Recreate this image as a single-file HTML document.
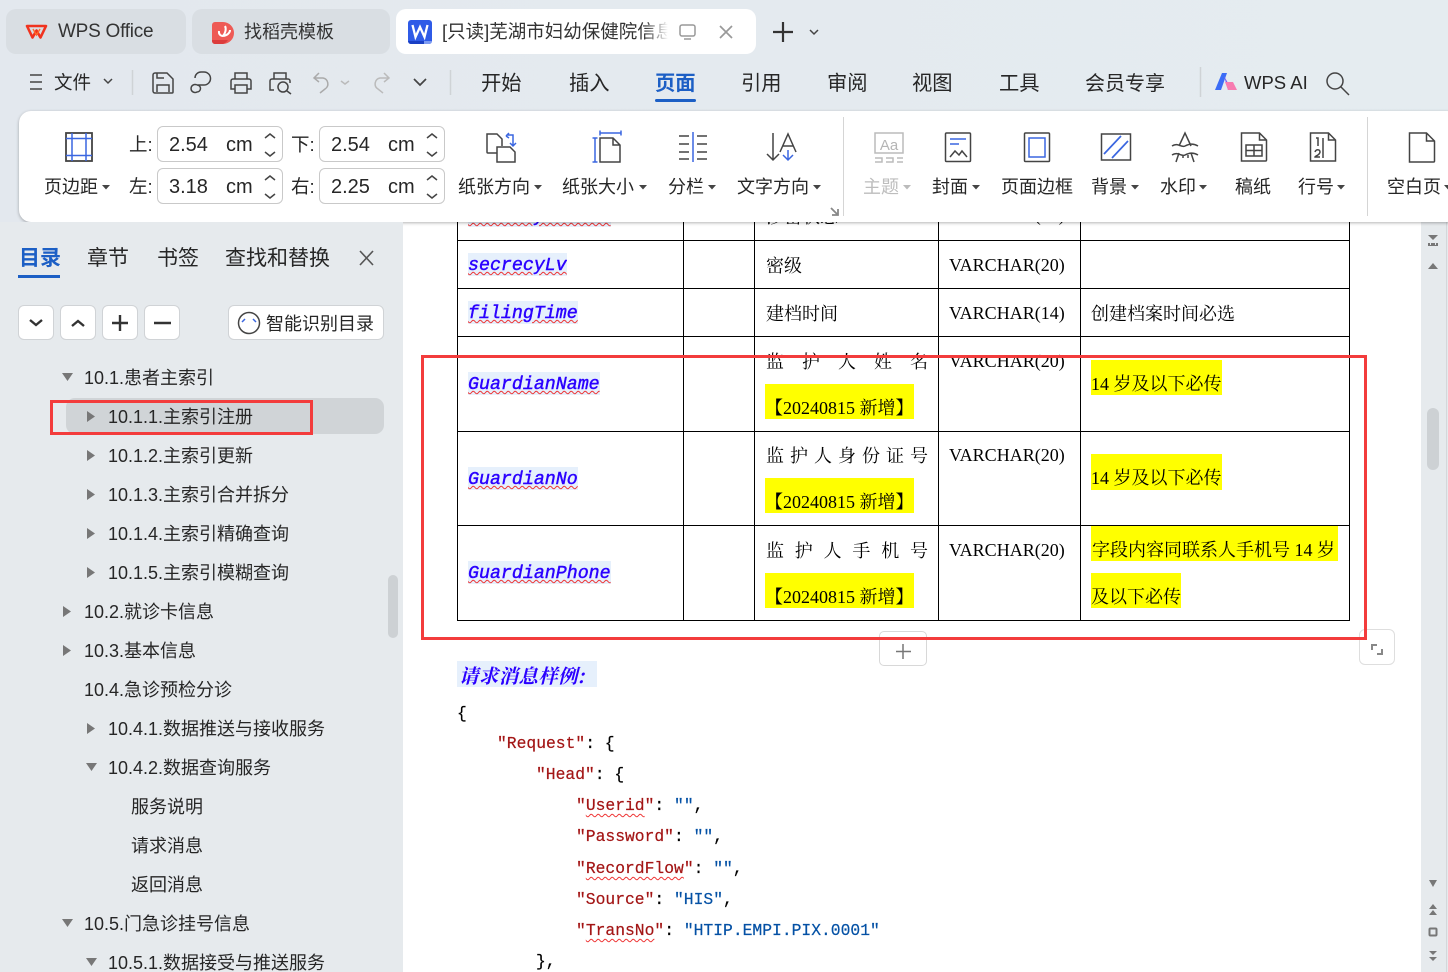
<!DOCTYPE html>
<html lang="zh-CN"><head><meta charset="utf-8"><title>WPS Office</title>
<style>
html,body{margin:0;padding:0;height:972px;overflow:hidden}
body{width:1448px;position:relative;background:linear-gradient(90deg,#e3e8ee,#e5ecf0);font-family:"Liberation Sans","Noto Sans CJK SC",sans-serif;color:#262626}
.a{position:absolute}
.t{position:absolute;white-space:nowrap;line-height:24px;height:24px;font-size:18px;margin-top:1px}
.n{margin-top:0}
.m{font-size:20.3px}
.s{font-family:"Liberation Serif","Noto Serif CJK SC",serif;color:#000;font-size:18px;margin-top:0}
.f{font-family:"Liberation Mono",monospace;font-style:italic;font-weight:normal;-webkit-text-stroke:.45px #2a00ff;color:#2a00ff;font-size:18.3px;background:#e6f0fc;height:23px;line-height:27px;margin-top:0;text-decoration:underline wavy #e33;text-decoration-thickness:1px;text-underline-offset:1px;overflow:hidden}
.h{position:absolute;background:#000;height:1.4px}
.v{position:absolute;background:#000;width:1.4px}
.y{position:absolute;background:#ff0;left:765px;width:149px;height:35px}
.sp{position:absolute;display:flex;justify-content:space-between;left:766px;width:162px;height:24px;line-height:24px;font-family:"Noto Serif CJK SC",serif;font-size:18px;color:#000}
.j{position:absolute;white-space:pre;font-family:"Liberation Mono",monospace;font-size:16.33px;line-height:24px;height:24px;color:#000;margin-top:1px;-webkit-text-stroke:.2px}
.j b{font-weight:normal;color:#a31515}.j i{font-style:normal;color:#0451a5}
.j u{text-decoration:underline wavy #e33;text-decoration-thickness:1px;text-underline-offset:3px}
.tab{position:absolute;top:9px;height:45px;border-radius:10px;background:#d9dee3}
.inp{position:absolute;width:124px;height:34px;background:#fff;border:1px solid #c9c9c9;border-radius:6px}
.btn{position:absolute;top:305px;width:34px;height:33px;background:#fff;border:1px solid #d0d3d6;border-radius:6px}
.rb{position:absolute;box-sizing:border-box;border:3px solid #f33c3c}
</style></head><body>

<!-- document -->
<div class="a" style="left:403px;top:200px;width:1018px;height:772px;background:#fff"></div>
<div class="a" style="left:1421px;top:200px;width:27px;height:772px;background:#e6eaed"></div>
<div class="a" style="left:1427px;top:408px;width:12px;height:62px;border-radius:6px;background:#cdd1d4"></div>
<div class="a" style="left:1446px;top:222px;width:1px;height:750px;background:#d4d7da"></div>

<!-- table lines -->
<div class="v" style="left:457px;top:215px;height:406px"></div>
<div class="v" style="left:683px;top:215px;height:406px"></div>
<div class="v" style="left:754px;top:215px;height:406px"></div>
<div class="v" style="left:938px;top:215px;height:406px"></div>
<div class="v" style="left:1080px;top:215px;height:406px"></div>
<div class="v" style="left:1349px;top:215px;height:406px"></div>
<div class="h" style="left:457px;top:240px;width:893px"></div>
<div class="h" style="left:457px;top:288px;width:893px"></div>
<div class="h" style="left:457px;top:336px;width:893px"></div>
<div class="h" style="left:457px;top:431px;width:893px"></div>
<div class="h" style="left:457px;top:525px;width:893px"></div>
<div class="h" style="left:457px;top:620px;width:893px"></div>

<!-- table clipped row -->
<div class="t f" style="left:468px;top:204px">secrecyStatus</div>
<div class="t s" style="left:766px;top:204px;font-family:'Noto Serif CJK SC',serif">涉密状态</div>
<div class="t s" style="left:949px;top:203px">VARCHAR(20)</div>

<!-- fields -->
<div class="t f" style="left:468px;top:253px">secrecyLv</div>
<div class="t f" style="left:468px;top:301px">filingTime</div>
<div class="t f" style="left:468px;top:372px">GuardianName</div>
<div class="t f" style="left:468px;top:467px">GuardianNo</div>
<div class="t f" style="left:468px;top:561px">GuardianPhone</div>

<div class="t s" style="left:766px;top:253px;font-family:'Noto Serif CJK SC',serif">密级</div>
<div class="t s" style="left:766px;top:301px;font-family:'Noto Serif CJK SC',serif">建档时间</div>

<div class="sp" style="top:349px"><span>监</span><span>护</span><span>人</span><span>姓</span><span>名</span></div>
<div class="y" style="top:384px"></div>
<div class="t s" style="left:765px;top:396px">【20240815 新增】</div>
<div class="sp" style="top:443px"><span>监</span><span>护</span><span>人</span><span>身</span><span>份</span><span>证</span><span>号</span></div>
<div class="y" style="top:478px"></div>
<div class="t s" style="left:765px;top:490px">【20240815 新增】</div>
<div class="sp" style="top:538px"><span>监</span><span>护</span><span>人</span><span>手</span><span>机</span><span>号</span></div>
<div class="y" style="top:573px"></div>
<div class="t s" style="left:765px;top:585px">【20240815 新增】</div>

<div class="t s" style="left:949px;top:253px">VARCHAR(20)</div>
<div class="t s" style="left:949px;top:301px">VARCHAR(14)</div>
<div class="t s" style="left:949px;top:349px">VARCHAR(20)</div>
<div class="t s" style="left:949px;top:443px">VARCHAR(20)</div>
<div class="t s" style="left:949px;top:538px">VARCHAR(20)</div>

<div class="t s" style="left:1091px;top:301px;font-family:'Noto Serif CJK SC',serif">创建档案时间必选</div>
<div class="a" style="left:1091px;top:360px;width:131px;height:35px;background:#ff0"></div>
<div class="t s" style="left:1091px;top:372px">14 岁及以下必传</div>
<div class="a" style="left:1091px;top:454px;width:131px;height:36px;background:#ff0"></div>
<div class="t s" style="left:1091px;top:466px">14 岁及以下必传</div>
<div class="a" style="left:1091px;top:526px;width:247px;height:35px;background:#ff0"></div>
<div class="t s" style="left:1092px;top:538px">字段内容同联系人手机号 14 岁</div>
<div class="a" style="left:1091px;top:573px;width:90px;height:35px;background:#ff0"></div>
<div class="t s" style="left:1091px;top:585px">及以下必传</div>

<!-- after table -->
<div class="a" style="left:879px;top:631px;width:46px;height:33px;border:1px solid #d8d8d8;border-radius:5px;background:#fff"></div>
<div class="a" style="left:1359px;top:629px;width:34px;height:34px;border:1px solid #dedede;border-radius:6px;background:#fff"></div>
<div class="a" style="left:457px;top:661px;width:140px;height:26px;background:#e6f0fc"></div>
<div class="t" style="left:459px;top:662px;font-family:'Noto Serif CJK SC',serif;font-weight:bold;font-style:italic;font-size:19.5px;letter-spacing:.3px;color:#2a00ff">请求消息样例:</div>

<div class="j" style="left:457px;top:701px">{</div>
<div class="j" style="left:497px;top:731px"><b>"Request"</b>: {</div>
<div class="j" style="left:536px;top:762px"><b>"Head"</b>: {</div>
<div class="j" style="left:576px;top:793px"><b>"<u>Userid</u>"</b>: <i>""</i>,</div>
<div class="j" style="left:576px;top:824px"><b>"Password"</b>: <i>""</i>,</div>
<div class="j" style="left:576px;top:856px"><b>"<u>RecordFlow</u>"</b>: <i>""</i>,</div>
<div class="j" style="left:576px;top:887px"><b>"Source"</b>: <i>"HIS"</i>,</div>
<div class="j" style="left:576px;top:918px"><b>"<u>TransNo</u>"</b>: <i>"HTIP.EMPI.PIX.0001"</i></div>
<div class="j" style="left:536px;top:949px">},</div>

<!-- red rects -->
<div class="rb" style="left:421px;top:355px;width:946px;height:285px"></div>

<!-- top tabs -->
<div class="tab" style="left:6px;width:180px"></div>
<div class="tab" style="left:192px;width:198px"></div>
<div class="tab" style="left:396px;width:360px;background:#fff"></div>
<div class="t" style="left:58px;top:19px;font-size:19px;letter-spacing:-.25px;color:#333">WPS Office</div>
<div class="t" style="left:244px;top:19px;font-size:18px;color:#333">找稻壳模板</div>
<div class="t" style="left:442px;top:19px;font-size:18.5px;width:226px;overflow:hidden;color:#333;-webkit-mask-image:linear-gradient(90deg,#000 90%,transparent)">[只读]芜湖市妇幼保健院信息平台</div>

<!-- quick toolbar / menu -->
<div class="t" style="left:54px;top:70px;font-size:18.5px">文件</div>
<div class="t m" style="left:481px;top:71px">开始</div>
<div class="t m" style="left:569px;top:71px">插入</div>
<div class="t m" style="left:655px;top:71px;font-weight:bold;color:#1c5fc5">页面</div>
<div class="a" style="left:655px;top:99px;width:41px;height:3px;border-radius:2px;background:#1c5fc5"></div>
<div class="t m" style="left:741px;top:71px">引用</div>
<div class="t m" style="left:827px;top:71px">审阅</div>
<div class="t m" style="left:912px;top:71px">视图</div>
<div class="t m" style="left:999px;top:71px">工具</div>
<div class="t m" style="left:1085px;top:71px;font-size:20px">会员专享</div>
<div class="t" style="left:1244px;top:70px;font-size:18.5px">WPS AI</div>

<!-- ribbon -->
<div class="a" style="left:19px;top:111px;width:1440px;height:111px;background:#fff;border-radius:12px;box-shadow:0 1px 3px rgba(0,0,0,.3)"></div>
<div class="a" style="left:843px;top:117px;width:1px;height:99px;background:#d5d5d5"></div>
<div class="a" style="left:1367px;top:117px;width:1px;height:99px;background:#d5d5d5"></div>

<div class="inp" style="left:157px;top:126px"></div>
<div class="inp" style="left:319px;top:126px"></div>
<div class="inp" style="left:157px;top:168px"></div>
<div class="inp" style="left:319px;top:168px"></div>
<div class="t n" style="left:129px;top:133px;font-size:18.5px">上:</div>
<div class="t n" style="left:291px;top:133px;font-size:18.5px">下:</div>
<div class="t n" style="left:129px;top:175px;font-size:18.5px">左:</div>
<div class="t n" style="left:291px;top:175px;font-size:18.5px">右:</div>
<div class="t n" style="left:169px;top:133px;font-size:20px">2.54</div><div class="t n" style="left:226px;top:133px;font-size:20px">cm</div>
<div class="t n" style="left:331px;top:133px;font-size:20px">2.54</div><div class="t n" style="left:388px;top:133px;font-size:20px">cm</div>
<div class="t n" style="left:169px;top:175px;font-size:20px">3.18</div><div class="t n" style="left:226px;top:175px;font-size:20px">cm</div>
<div class="t n" style="left:331px;top:175px;font-size:20px">2.25</div><div class="t n" style="left:388px;top:175px;font-size:20px">cm</div>

<div class="t" style="left:44px;top:174px">页边距</div>
<div class="t" style="left:458px;top:174px">纸张方向</div>
<div class="t" style="left:562px;top:174px">纸张大小</div>
<div class="t" style="left:668px;top:174px">分栏</div>
<div class="t" style="left:737px;top:174px">文字方向</div>
<div class="t" style="left:863px;top:174px;color:#bdbdbd">主题</div>
<div class="t" style="left:932px;top:174px">封面</div>
<div class="t" style="left:1001px;top:174px">页面边框</div>
<div class="t" style="left:1091px;top:174px">背景</div>
<div class="t" style="left:1160px;top:174px">水印</div>
<div class="t" style="left:1235px;top:174px">稿纸</div>
<div class="t" style="left:1298px;top:174px">行号</div>
<div class="t" style="left:1387px;top:174px">空白页</div>

<!-- sidebar -->
<div class="a" style="left:0;top:222px;width:403px;height:750px;background:#e6eaed"></div>
<div class="a" style="left:388px;top:575px;width:10px;height:63px;border-radius:5px;background:#cdd1d4"></div>
<div class="t" style="left:19px;top:246px;font-size:21px;font-weight:bold;color:#1c5fc5">目录</div>
<div class="a" style="left:18px;top:275px;width:42px;height:3px;background:#1c5fc5"></div>
<div class="t" style="left:87px;top:246px;font-size:21px">章节</div>
<div class="t" style="left:157px;top:246px;font-size:21px">书签</div>
<div class="t" style="left:225px;top:246px;font-size:21px">查找和替换</div>

<div class="btn" style="left:18px"></div>
<div class="btn" style="left:60px"></div>
<div class="btn" style="left:102px"></div>
<div class="btn" style="left:144px"></div>
<div class="btn" style="left:228px;width:154px"></div>
<div class="t" style="left:266px;top:311px">智能识别目录</div>

<div class="a" style="left:66px;top:398px;width:318px;height:36px;border-radius:9px;background:#d0d4d7"></div>
<div class="t" style="left:84px;top:365px">10.1.患者主索引</div>
<div class="t" style="left:108px;top:404px">10.1.1.主索引注册</div>
<div class="t" style="left:108px;top:443px">10.1.2.主索引更新</div>
<div class="t" style="left:108px;top:482px">10.1.3.主索引合并拆分</div>
<div class="t" style="left:108px;top:521px">10.1.4.主索引精确查询</div>
<div class="t" style="left:108px;top:560px">10.1.5.主索引模糊查询</div>
<div class="t" style="left:84px;top:599px">10.2.就诊卡信息</div>
<div class="t" style="left:84px;top:638px">10.3.基本信息</div>
<div class="t" style="left:84px;top:677px">10.4.急诊预检分诊</div>
<div class="t" style="left:108px;top:716px">10.4.1.数据推送与接收服务</div>
<div class="t" style="left:108px;top:755px">10.4.2.数据查询服务</div>
<div class="t" style="left:131px;top:794px">服务说明</div>
<div class="t" style="left:131px;top:833px">请求消息</div>
<div class="t" style="left:131px;top:872px">返回消息</div>
<div class="t" style="left:84px;top:911px">10.5.门急诊挂号信息</div>
<div class="t" style="left:108px;top:950px">10.5.1.数据接受与推送服务</div>
<div class="rb" style="left:50px;top:400px;width:263px;height:35px"></div>

<!-- icons -->
<svg class="a" style="left:0;top:0" width="1448" height="972" viewBox="0 0 1448 972" fill="none" stroke="#444" stroke-width="1.5">
<!-- tab logos -->
<path d="M27 26h19l-5.500 11.500-4-7-4 7z" stroke="#f0331f" stroke-width="2.600" stroke-linejoin="round"/>
<path d="M33 29l3.500 6 3.500-6" stroke="#ff6a2a" stroke-width="1.400"/>
<path d="M212 25a3 3 0 0 1 3-3h8a11 11 0 0 1 0 22h-8a3 3 0 0 1-3-3z" fill="#ee5a55" stroke="none"/>
<path d="M212 40h16a11 11 0 0 1-5 4h-8a3 3 0 0 1-3-3z" fill="#dc3c3c" stroke="none"/>
<path d="M225 26c1.500 3 .5 7-2 10M230 30c0 3-3 5.500-7 6M219 31c-.5 3 1.500 5 4 5" stroke="#fff" stroke-width="2"/>
<rect x="408" y="20" width="24" height="24" rx="3" fill="#2f5be7" stroke="none"/>
<path d="M408 41h16v3h-13a3 3 0 0 1-3-3z" fill="#1a3fc4" stroke="none"/>
<path d="M424 41h8a3 3 0 0 1-3 3h-5z" fill="#7d9bf2" stroke="none"/>
<path d="M412.500 25l3 12 4.500-10 4.500 10 3-12" stroke="#fff" stroke-width="2.300"/>
<rect x="680" y="25" width="15" height="11" rx="2" stroke="#999"/><path d="M684 39h7" stroke="#999"/>
<path d="M720 26l12 12M732 26l-12 12" stroke="#999" stroke-width="1.700"/>
<path d="M783 22v20M773 32h20" stroke="#333" stroke-width="2.200"/>
<path d="M810 30l4 4 4-4" stroke="#444"/>
<!-- quick bar -->
<path d="M30 75h12M30 82h12M30 89h12" stroke="#444"/>
<path d="M104 79l4 4 4-4" />
<path d="M132.500 70v25M450.500 70v25M1200.500 67v30" stroke="#cfd3d6"/>
<path d="M153 75a2 2 0 0 1 2-2h12l6 6v13a1 1 0 0 1-1 1h-17a2 2 0 0 1-2-2zM157 92v-7h12v7M157 73v5h7" stroke="#444"/>
<path d="M197 85h7a6.500 6.500 0 0 0 0-13h-3a6 6 0 0 0-6 6M197 85a4 4 0 1 0 0 7 3.500 3.500 0 0 0 0-7" stroke="#444"/>
<path d="M235 79v-6h12v6M235 89h-4v-8a2 2 0 0 1 2-2h16a2 2 0 0 1 2 2v8h-4M235 85h12v8h-12z" stroke="#444"/>
<path d="M274 79v-6h12v6M274 90h-4v-9a2 2 0 0 1 2-2h16a2 2 0 0 1 2 2v2" stroke="#444"/><circle cx="283" cy="87" r="5"/><path d="M287 91l4 3"/>
<path d="M319 73l-5 5 5 4M314 78h9a6 6 0 0 1 2 11l-5 4" stroke="#aaa"/>
<path d="M341 81l4 3 4-3" stroke="#bbb"/>
<path d="M384 73l5 5-5 4M389 78h-9a6 6 0 0 0-2 11l5 4" stroke="#bbb"/>
<path d="M414 79l6 6 6-6" stroke="#444" stroke-width="1.700"/>
<path d="M1215 90l7-17h5l-6 17z" fill="#3b6cf6" stroke="none"/><path d="M1224 76l4 14h4z" fill="#7a5cf0" stroke="none"/><path d="M1225 82h8l4 8h-9z" fill="#f77bb0" stroke="none"/>
<circle cx="1335" cy="81" r="8" stroke="#444"/><path d="M1341 87l8 8" stroke="#444"/>

<!-- spinners -->
<g stroke="#444"><path d="M265 138l5-4 5 4M265 152l5 4 5-4M427 138l5-4 5 4M427 152l5 4 5-4M265 180l5-4 5 4M265 194l5 4 5-4M427 180l5-4 5 4M427 194l5 4 5-4"/></g>

<!-- margin -->
<rect x="66" y="133" width="26" height="28" stroke="#444" stroke-width="1.800"/>
<path d="M72 133v28M86 133v28M66 138.500h26M66 155.500h26" stroke="#3a66e0"/>
<!-- orientation -->
<path d="M497 153h-9a1 1 0 0 1-1-1v-18h10l5 5v7M497 147h13l5 5v10h-18z" stroke="#444"/>
<path d="M507 135h6v4M510 143l3 3 3-3M506 136l3-3M506 136l3 2M513 137v8" stroke="#3a66e0"/>
<!-- size -->
<path d="M600 133h21M600 130.500v5M621 130.500v5M595 138v24M592.500 138h5M592.500 162h5" stroke="#3a66e0"/>
<path d="M600 138h13l7 7v17h-20zM613 138v7h7" stroke="#444"/>
<!-- columns -->
<path d="M679 136h10M679 144h10M679 152h10M679 159h10M697 136h10M697 144h10M697 152h10M697 159h10" stroke="#444"/>
<path d="M693 132v30" stroke="#3a66e0"/>
<!-- text direction -->
<path d="M773 133v27M767 154l6 6 6-6M780 152l8-18 8 18M783 146h10" stroke="#444"/>
<path d="M788 150v10M783 155l5 5 5-5" stroke="#3a66e0"/>
<path d="M831 208l7 7M838 209v6h-6" stroke="#888" stroke-width="1.800"/>
<!-- theme -->
<path d="M875 153v-20h28v20zM875 158h7v4h-7M886 158h7v4h-7M897 158h6M897 162h6" stroke="#bbb"/>
<text x="889" y="150" text-anchor="middle" font-size="15" fill="#b5b5b5" stroke="none" font-family="Liberation Sans, sans-serif">Aa</text>
<!-- cover -->
<rect x="945.500" y="133" width="25" height="28.500" rx="1" stroke="#444"/>
<path d="M950 139h16M950 144h9" stroke="#3a66e0"/><path d="M950 157l5-6 4 4 3-4 5 6" stroke="#444"/>
<!-- page border -->
<rect x="1024.500" y="133" width="25" height="28.500" rx="1" stroke="#444"/><rect x="1029" y="138" width="16" height="19" stroke="#3a66e0"/>
<!-- background -->
<rect x="1101.500" y="134" width="29" height="26" stroke="#444"/>
<path d="M1104 154l17-18M1112 158l16-17" stroke="#3a66e0" stroke-width="1.700"/>
<!-- watermark -->
<path d="M1179 146l6-13 6 13M1176 162l3-9M1194 162l-3-9M1183 155l0 3M1188 155l0 3M1172 146c6-4 9 2 13 0s8-3 13 0M1172 155c6-4 9 2 13 0s8-3 13 0" stroke="#444"/>
<!-- manuscript -->
<path d="M1241.500 133h18l7 7v20a1 1 0 0 1-1 1h-24zM1259.500 133v7h7M1246 145h16v11h-16zM1246 150.500h16M1254 145v11" stroke="#444"/>
<!-- line nr -->
<path d="M1310.500 133h18l7 7v21h-25zM1328.500 133v7h7M1323 138v20" stroke="#444"/>
<path d="M1316 138h2v8M1315 152c1-3 5-3 5 0s-5 4-5 5h5" stroke="#444"/>
<!-- blank -->
<path d="M1409.500 133h17l8 8v20a1 1 0 0 1-1 1h-24zM1426.500 133v8h8" stroke="#444"/>

<!-- ribbon small chevrons -->
<g fill="#444" stroke="none">
<path d="M102 185h8l-4 4.500zM534 185h8l-4 4.500zM639 185h8l-4 4.500zM708 185h8l-4 4.500zM813 185h8l-4 4.500zM972 185h8l-4 4.500zM1131 185h8l-4 4.500zM1199 185h8l-4 4.500zM1337 185h8l-4 4.500zM1444 185h8l-4 4.500z"/>
<path d="M903 185h8l-4 4.500z" fill="#bbb"/>
</g>

<!-- sidebar icons -->
<path d="M360 251l13 14M373 251l-13 14" stroke="#555" stroke-width="1.600"/>
<path d="M30 320l6 5 6-5M72 326l6-5 6 5" stroke="#333" stroke-width="2.400"/>
<path d="M120 315v16M112 323h16M154 323h17" stroke="#333" stroke-width="2.400"/>
<circle cx="249" cy="323" r="10.500" stroke="#444"/><path d="M242 322l3-3M253 319l3 3" stroke="#3a66e0"/>
<g fill="#777" stroke="none">
<path d="M62 373h11l-5.500 8zM62 919h11l-5.500 8zM86 763h11l-5.500 8zM86 958h11l-5.500 8z"/>
<path d="M87 411l8 5.500-8 5.500zM87 450l8 5.500-8 5.500zM87 489l8 5.500-8 5.500zM87 528l8 5.500-8 5.500zM87 567l8 5.500-8 5.500zM63 606l8 5.500-8 5.500zM63 645l8 5.500-8 5.500zM87 723l8 5.500-8 5.500z"/>
<!-- scrollbar icons -->
<path d="M1428 235h10l-5 5zM1428 246v-3h2v2h1v-2h4v2h1v-2h2v3z"/>
<path d="M1428 269l5-6 5 6z"/>
<path d="M1429 880h8l-4 7zM1429 909l4-5 4 5zM1429 915l4-5 4 5zM1429 951l4 4 4-4zM1429 957l4 4 4-4z"/>
</g>
<rect x="1429.500" y="928.500" width="7" height="7" rx="1" stroke="#777" stroke-width="2"/>
<!-- plus & expand -->
<path d="M903 644v15M896 651.500h15" stroke="#777"/>
<path d="M1371 644h6v2h-4v4h-2zM1383 655h-6v-2h4v-4h2z" fill="#888" stroke="none"/>
</svg>
</body></html>
